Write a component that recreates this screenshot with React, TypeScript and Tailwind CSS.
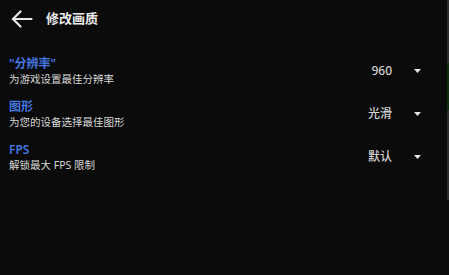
type Row = { label: string; desc: string; value: string }

const ROWS: Row[] = [
  { label: '"分辨率"', desc: '为游戏设置最佳分辨率', value: '960' },
  { label: '图形', desc: '为您的设备选择最佳图形', value: '光滑' },
  { label: 'FPS', desc: '解锁最大 FPS 限制', value: '默认' },
]

const FONT = "font-['Noto_Sans','Noto_Sans_CJK_SC',sans-serif]"

// solid down-triangle used by the pickers
function Caret() {
  return (
    <svg width="7" height="4" viewBox="0 0 7 4" className="block">
      <path d="M0 0 H7 L3.5 4 Z" fill="#e6e6e6" />
    </svg>
  )
}

export default function App() {
  return (
    <div className={`flex h-[275px] w-[449px] overflow-hidden bg-[#0b0b0b] ${FONT}`}>
      <div className="flex-1">
        <div className="flex h-[38px] items-center pl-[11px]">
          <svg width="22" height="18" viewBox="0 0 22 18" fill="none" stroke="#e8e8e8" strokeWidth="2.2" strokeLinecap="round" strokeLinejoin="round">
            <path d="M20.5 9 H2" />
            <path d="M9.5 1.5 L2 9 L9.5 16.5" />
          </svg>
          <span className="ml-[13px] text-[13px] font-bold text-[#ececec]">修改画质</span>
        </div>

        <div className="pt-[11.5px]">
          {ROWS.map((r) => (
            <div key={r.label} className="flex h-[43px] items-center pl-[9px] pr-[26px]">
              <div className="flex-1">
                <div className="text-[12px] font-semibold leading-[15px] text-[#4676e0]">{r.label}</div>
                <div className="text-[10.5px] leading-[16px] text-[#d6d6d6]">{r.desc}</div>
              </div>
              <span className="text-[12px] font-medium text-[#d2d2d2]">{r.value}</span>
              <div className="ml-[22px]">
                <Caret />
              </div>
            </div>
          ))}
        </div>
      </div>

      <div className="flex w-[2px] flex-col">
        <div className="h-[63px] bg-[#2e2e2e]" />
        <div className="h-[47px] bg-[#0f2c0f]" />
        <div className="h-[90px] bg-[#2e2e2e]" />
      </div>
    </div>
  )
}
